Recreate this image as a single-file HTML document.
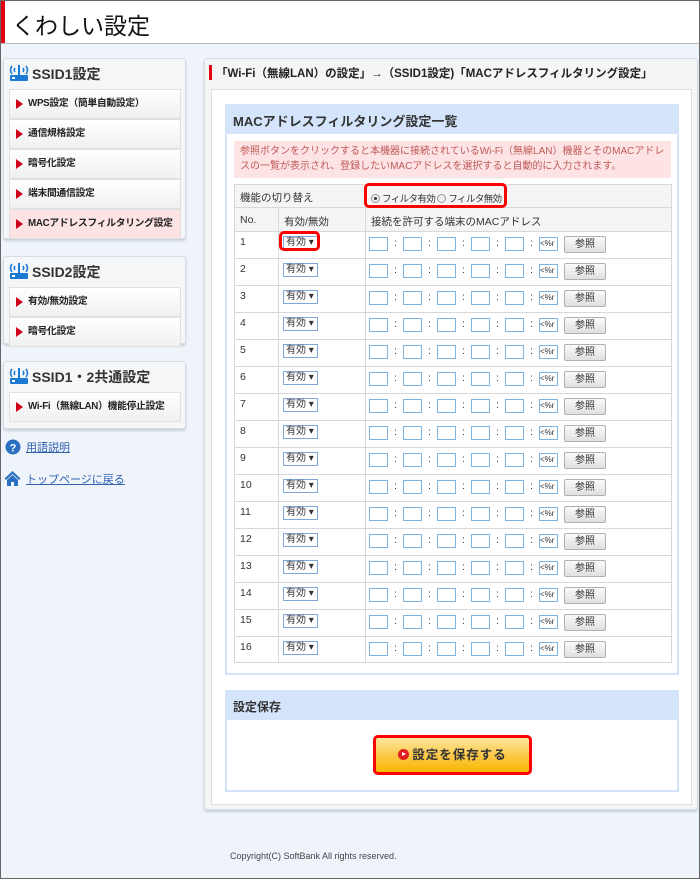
<!DOCTYPE html><html><head><meta charset="utf-8"><style>
*{box-sizing:border-box;margin:0;padding:0}
body{width:700px;height:879px;background:#eff4fb;font-family:"Liberation Sans","Noto Sans CJK JP",sans-serif;position:relative;overflow:hidden;border:1px solid #666;color:#333}
.a{position:absolute}
.hd{left:0;top:0;width:698px;height:43px;background:#fff;border-bottom:1px solid #bbb}
.hd .bar{left:0;top:0;width:4px;height:42px;background:#e50012}
.hd h1{position:absolute;left:11px;top:6px;font-size:23px;font-weight:normal;color:#111}
.panel{background:#f4f6f8;border:1px solid #d6dde5;border-radius:3px;box-shadow:0 2px 2px #c8d0da}
.pt{position:absolute;left:28px;font-size:14px;font-weight:bold;color:#333}
.item{position:absolute;left:5px;width:172px;height:30px;background:linear-gradient(#fff,#f0f0f0);border:1px solid #e1e1e1;font-size:9.8px;font-weight:bold;color:#222;line-height:28px;padding-left:18px;white-space:nowrap;overflow:hidden;letter-spacing:-0.3px}
.item:before{content:"";position:absolute;left:6px;top:9px;border-left:7px solid #d0001a;border-top:5px solid transparent;border-bottom:5px solid transparent}
.lnk{font-size:11px;color:#3062b0;text-decoration:underline}
table{border-collapse:collapse;font-size:10.5px;color:#333;table-layout:fixed}
td{border:1px solid #d8d8d8;padding:0 0 0 5px;vertical-align:top;padding-top:4px;white-space:nowrap;overflow:hidden}
.sel{display:inline-block;width:35px;height:14px;border:1px solid #7fa7d8;font-size:10px;line-height:12px;padding-left:2px;background:#fff;margin-top:-1px}
.b{display:inline-block;width:19px;height:14px;border:1px solid #7fb3e0;background:#fff;vertical-align:top}
.c{display:inline-block;width:15px;text-align:center;font-size:10px;vertical-align:top;line-height:14px}
.t{display:inline-block;width:19px;height:14px;border:1px solid #7fb3e0;font-size:8px;line-height:12px;overflow:hidden;vertical-align:top;background:#fff}
.btn{display:inline-block;width:42px;height:17px;border:1px solid #b0b0b0;border-radius:2px;background:linear-gradient(#fafafa,#e0e0e0);font-size:10px;text-align:center;line-height:15px;margin-left:6px;vertical-align:top;margin-top:-1px}
.mc{padding-left:3px;padding-top:5px}
.rd{display:inline-block;width:9px;height:9px;border-radius:50%;border:1px solid #999;background:#eee;vertical-align:-1px;position:relative}
</style></head><body>
<div class="a hd"><div class="a bar"></div><h1>くわしい設定</h1></div>

<div class="a panel" style="left:2px;top:57px;width:183px;height:181px">
<svg class="a" style="left:4px;top:5px" width="22" height="18" viewBox="0 0 22 18"><path d="M4 2q-3 4 0 8M7 4q-1.5 2 0 4M18 2q3 4 0 8M15 4q1.5 2 0 4" stroke="#1a7ad4" stroke-width="1.6" fill="none"/><rect x="10" y="1" width="2" height="10" fill="#1a7ad4"/><rect x="2" y="11" width="18" height="6" rx="1" fill="#1a7ad4"/><rect x="4" y="13" width="3" height="2" fill="#fff"/></svg>
<div class="pt" style="top:5px">SSID1設定</div>
<div class="item" style="top:30px">WPS設定（簡単自動設定）</div>
<div class="item" style="top:60px">通信規格設定</div>
<div class="item" style="top:90px">暗号化設定</div>
<div class="item" style="top:120px">端末間通信設定</div>
<div class="item" style="top:150px;background:#fde3e3">MACアドレスフィルタリング設定</div>
</div>
<div class="a panel" style="left:2px;top:255px;width:183px;height:88px">
<svg class="a" style="left:4px;top:5px" width="22" height="18" viewBox="0 0 22 18"><path d="M4 2q-3 4 0 8M7 4q-1.5 2 0 4M18 2q3 4 0 8M15 4q1.5 2 0 4" stroke="#1a7ad4" stroke-width="1.6" fill="none"/><rect x="10" y="1" width="2" height="10" fill="#1a7ad4"/><rect x="2" y="11" width="18" height="6" rx="1" fill="#1a7ad4"/><rect x="4" y="13" width="3" height="2" fill="#fff"/></svg>
<div class="pt" style="top:5px">SSID2設定</div>
<div class="item" style="top:30px">有効/無効設定</div>
<div class="item" style="top:60px">暗号化設定</div>
</div>
<div class="a panel" style="left:2px;top:360px;width:183px;height:68px">
<svg class="a" style="left:4px;top:5px" width="22" height="18" viewBox="0 0 22 18"><path d="M4 2q-3 4 0 8M7 4q-1.5 2 0 4M18 2q3 4 0 8M15 4q1.5 2 0 4" stroke="#1a7ad4" stroke-width="1.6" fill="none"/><rect x="10" y="1" width="2" height="10" fill="#1a7ad4"/><rect x="2" y="11" width="18" height="6" rx="1" fill="#1a7ad4"/><rect x="4" y="13" width="3" height="2" fill="#fff"/></svg>
<div class="pt" style="top:5px">SSID1・2共通設定</div>
<div class="item" style="top:30px">Wi-Fi（無線LAN）機能停止設定</div>
</div>
<svg class="a" style="left:4px;top:438px" width="16" height="16"><circle cx="8" cy="8" r="7.5" fill="#2a6fc0"/><text x="8" y="12.5" font-size="11" font-weight="bold" fill="#fff" text-anchor="middle" font-family="Liberation Sans">?</text></svg>
<div class="a lnk" style="left:25px;top:438px">用語説明</div>
<svg class="a" style="left:3px;top:469px" width="17" height="16" viewBox="0 0 17 16"><path d="M8.5 1L0.5 8.5l1.5 1.5L8.5 4l6.5 6 1.5-1.5z" fill="#2a6fc0"/><path d="M3 10v6h4v-4h3v4h4v-6L8.5 5z" fill="#2a6fc0"/></svg>
<div class="a lnk" style="left:25px;top:470px">トップページに戻る</div>

<div class="a panel" style="left:203px;top:57px;width:494px;height:752px;background:#f3f5f7"></div>
<div class="a" style="left:208px;top:64px;width:3px;height:15px;background:#e50012"></div>
<div class="a" style="left:215px;top:64px;font-size:11.5px;font-weight:bold;color:#222">「Wi-Fi（無線LAN）の設定」→（SSID1設定)「MACアドレスフィルタリング設定」</div>
<div class="a" style="left:210px;top:88px;width:481px;height:716px;background:#fff;border:1px solid #e0e0e0"></div>

<div class="a" style="left:224px;top:103px;width:454px;height:571px;border:2px solid #d4e5fb;background:#fff"></div>
<div class="a" style="left:224px;top:103px;width:454px;height:30px;background:#d4e5fb"></div>
<div class="a" style="left:232px;top:110px;font-size:13px;font-weight:bold;color:#333">MACアドレスフィルタリング設定一覧</div>
<div class="a" style="left:233px;top:140px;width:437px;height:37px;background:#fde3e3;color:#c05a5a;font-size:10px;line-height:15px;padding:3px 0 0 6px">参照ボタンをクリックすると本機器に接続されているWi-Fi（無線LAN）機器とそのMACアドレスの一覧が表示され、登録したいMACアドレスを選択すると自動的に入力されます。</div>

<table class="a" style="left:233px;top:183px;width:438px">
<colgroup><col style="width:44px"><col style="width:87px"><col></colgroup>
<tr style="height:23px;background:#f5f5f5"><td colspan="2" style="padding-top:5px">機能の切り替え</td><td style="padding-left:5px;padding-top:6px;font-size:9.5px;letter-spacing:-0.6px"><span class="rd"><span class="a" style="left:2px;top:2px;width:3px;height:3px;border-radius:50%;background:#333"></span></span> フィルタ有効 <span class="rd"></span> フィルタ無効</td></tr>
<tr style="height:24px;background:#f5f5f5"><td style="padding-top:6px">No.</td><td style="padding-top:6px">有効/無効</td><td style="padding-top:6px">接続を許可する端末のMACアドレス</td></tr>
<tr style="height:27px"><td>1</td><td style="padding-left:4px"><span class="sel">有効 ▾</span></td><td class="mc"><span class="b"></span><span class="c">:</span><span class="b"></span><span class="c">:</span><span class="b"></span><span class="c">:</span><span class="b"></span><span class="c">:</span><span class="b"></span><span class="c">:</span><span class="t">&lt;%r</span><span class="btn">参照</span></td></tr>
<tr style="height:27px"><td>2</td><td style="padding-left:4px"><span class="sel">有効 ▾</span></td><td class="mc"><span class="b"></span><span class="c">:</span><span class="b"></span><span class="c">:</span><span class="b"></span><span class="c">:</span><span class="b"></span><span class="c">:</span><span class="b"></span><span class="c">:</span><span class="t">&lt;%r</span><span class="btn">参照</span></td></tr>
<tr style="height:27px"><td>3</td><td style="padding-left:4px"><span class="sel">有効 ▾</span></td><td class="mc"><span class="b"></span><span class="c">:</span><span class="b"></span><span class="c">:</span><span class="b"></span><span class="c">:</span><span class="b"></span><span class="c">:</span><span class="b"></span><span class="c">:</span><span class="t">&lt;%r</span><span class="btn">参照</span></td></tr>
<tr style="height:27px"><td>4</td><td style="padding-left:4px"><span class="sel">有効 ▾</span></td><td class="mc"><span class="b"></span><span class="c">:</span><span class="b"></span><span class="c">:</span><span class="b"></span><span class="c">:</span><span class="b"></span><span class="c">:</span><span class="b"></span><span class="c">:</span><span class="t">&lt;%r</span><span class="btn">参照</span></td></tr>
<tr style="height:27px"><td>5</td><td style="padding-left:4px"><span class="sel">有効 ▾</span></td><td class="mc"><span class="b"></span><span class="c">:</span><span class="b"></span><span class="c">:</span><span class="b"></span><span class="c">:</span><span class="b"></span><span class="c">:</span><span class="b"></span><span class="c">:</span><span class="t">&lt;%r</span><span class="btn">参照</span></td></tr>
<tr style="height:27px"><td>6</td><td style="padding-left:4px"><span class="sel">有効 ▾</span></td><td class="mc"><span class="b"></span><span class="c">:</span><span class="b"></span><span class="c">:</span><span class="b"></span><span class="c">:</span><span class="b"></span><span class="c">:</span><span class="b"></span><span class="c">:</span><span class="t">&lt;%r</span><span class="btn">参照</span></td></tr>
<tr style="height:27px"><td>7</td><td style="padding-left:4px"><span class="sel">有効 ▾</span></td><td class="mc"><span class="b"></span><span class="c">:</span><span class="b"></span><span class="c">:</span><span class="b"></span><span class="c">:</span><span class="b"></span><span class="c">:</span><span class="b"></span><span class="c">:</span><span class="t">&lt;%r</span><span class="btn">参照</span></td></tr>
<tr style="height:27px"><td>8</td><td style="padding-left:4px"><span class="sel">有効 ▾</span></td><td class="mc"><span class="b"></span><span class="c">:</span><span class="b"></span><span class="c">:</span><span class="b"></span><span class="c">:</span><span class="b"></span><span class="c">:</span><span class="b"></span><span class="c">:</span><span class="t">&lt;%r</span><span class="btn">参照</span></td></tr>
<tr style="height:27px"><td>9</td><td style="padding-left:4px"><span class="sel">有効 ▾</span></td><td class="mc"><span class="b"></span><span class="c">:</span><span class="b"></span><span class="c">:</span><span class="b"></span><span class="c">:</span><span class="b"></span><span class="c">:</span><span class="b"></span><span class="c">:</span><span class="t">&lt;%r</span><span class="btn">参照</span></td></tr>
<tr style="height:27px"><td>10</td><td style="padding-left:4px"><span class="sel">有効 ▾</span></td><td class="mc"><span class="b"></span><span class="c">:</span><span class="b"></span><span class="c">:</span><span class="b"></span><span class="c">:</span><span class="b"></span><span class="c">:</span><span class="b"></span><span class="c">:</span><span class="t">&lt;%r</span><span class="btn">参照</span></td></tr>
<tr style="height:27px"><td>11</td><td style="padding-left:4px"><span class="sel">有効 ▾</span></td><td class="mc"><span class="b"></span><span class="c">:</span><span class="b"></span><span class="c">:</span><span class="b"></span><span class="c">:</span><span class="b"></span><span class="c">:</span><span class="b"></span><span class="c">:</span><span class="t">&lt;%r</span><span class="btn">参照</span></td></tr>
<tr style="height:27px"><td>12</td><td style="padding-left:4px"><span class="sel">有効 ▾</span></td><td class="mc"><span class="b"></span><span class="c">:</span><span class="b"></span><span class="c">:</span><span class="b"></span><span class="c">:</span><span class="b"></span><span class="c">:</span><span class="b"></span><span class="c">:</span><span class="t">&lt;%r</span><span class="btn">参照</span></td></tr>
<tr style="height:27px"><td>13</td><td style="padding-left:4px"><span class="sel">有効 ▾</span></td><td class="mc"><span class="b"></span><span class="c">:</span><span class="b"></span><span class="c">:</span><span class="b"></span><span class="c">:</span><span class="b"></span><span class="c">:</span><span class="b"></span><span class="c">:</span><span class="t">&lt;%r</span><span class="btn">参照</span></td></tr>
<tr style="height:27px"><td>14</td><td style="padding-left:4px"><span class="sel">有効 ▾</span></td><td class="mc"><span class="b"></span><span class="c">:</span><span class="b"></span><span class="c">:</span><span class="b"></span><span class="c">:</span><span class="b"></span><span class="c">:</span><span class="b"></span><span class="c">:</span><span class="t">&lt;%r</span><span class="btn">参照</span></td></tr>
<tr style="height:27px"><td>15</td><td style="padding-left:4px"><span class="sel">有効 ▾</span></td><td class="mc"><span class="b"></span><span class="c">:</span><span class="b"></span><span class="c">:</span><span class="b"></span><span class="c">:</span><span class="b"></span><span class="c">:</span><span class="b"></span><span class="c">:</span><span class="t">&lt;%r</span><span class="btn">参照</span></td></tr>
<tr style="height:26px"><td>16</td><td style="padding-left:4px"><span class="sel">有効 ▾</span></td><td class="mc"><span class="b"></span><span class="c">:</span><span class="b"></span><span class="c">:</span><span class="b"></span><span class="c">:</span><span class="b"></span><span class="c">:</span><span class="b"></span><span class="c">:</span><span class="t">&lt;%r</span><span class="btn">参照</span></td></tr>
</table>
<div class="a" style="left:363px;top:182px;width:143px;height:25px;border:3px solid #f00;border-radius:5px"></div>
<div class="a" style="left:278px;top:230px;width:41px;height:20px;border:3px solid #f00;border-radius:5px"></div>

<div class="a" style="left:224px;top:689px;width:454px;height:102px;border:2px solid #d4e5fb;background:#fff"></div>
<div class="a" style="left:224px;top:689px;width:454px;height:30px;background:#d4e5fb"></div>
<div class="a" style="left:232px;top:697px;font-size:12px;font-weight:bold;color:#333">設定保存</div>
<div class="a" style="left:372px;top:734px;width:159px;height:40px;border:3px solid #f00;border-radius:5px;background:linear-gradient(#fde7a0,#fcc84a 50%,#f8b800);text-align:center;line-height:34px;font-size:12.5px;font-weight:bold;letter-spacing:1px;color:#333"><span style="display:inline-block;width:11px;height:11px;border-radius:50%;background:#e02020;vertical-align:-1px;margin-right:3px;position:relative"><span style="position:absolute;left:4px;top:3px;border-left:4px solid #fff;border-top:2.5px solid transparent;border-bottom:2.5px solid transparent"></span></span>設定を保存する</div>

<div class="a" style="left:229px;top:850px;font-size:9px;color:#444">Copyright(C) SoftBank All rights reserved.</div>
</body></html>
